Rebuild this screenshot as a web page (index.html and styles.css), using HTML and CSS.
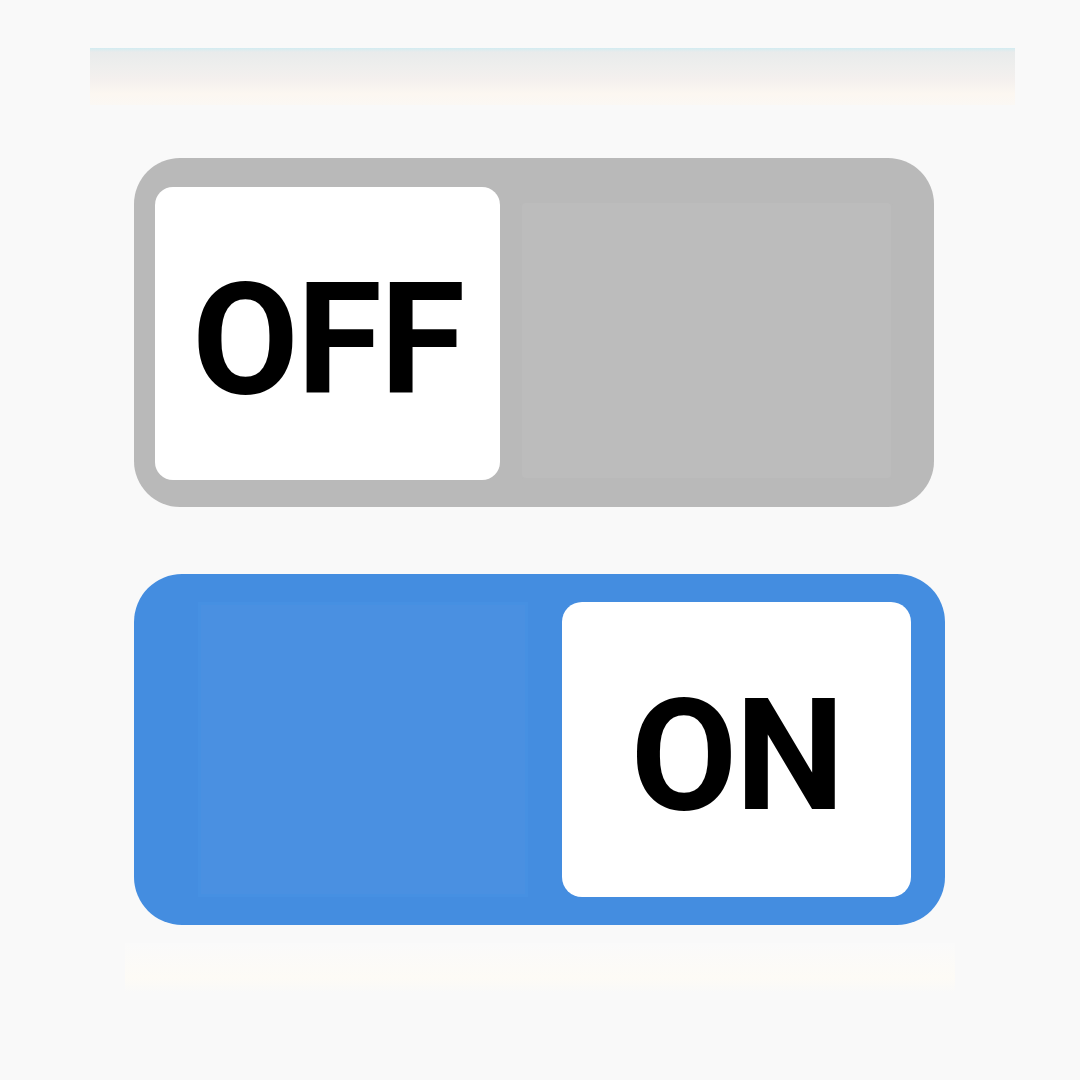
FILE: index.html
```html
<!DOCTYPE html>
<html>
<head>
<meta charset="utf-8">
<link rel="stylesheet" href="styles.css">
</head>
<body>
<div class="page">
  <div class="topbar"></div>
  <div class="toggle toggle-off">
    <div class="knob"><span class="label">OFF</span></div>
    <div class="track"></div>
  </div>
  <div class="toggle toggle-on">
    <div class="track"></div>
    <div class="knob"><span class="label">ON</span></div>
  </div>
  <div class="footband"></div>
</div>
</body>
</html>
```
FILE: styles.css
```css
html, body {
  margin: 0;
  padding: 0;
  background: #f9f9f9;
  width: 1080px;
  height: 1080px;
  overflow: hidden;
}
.page {
  display: flex;
  flex-direction: column;
  padding-top: 48px;
}
.topbar {
  margin-left: 90px;
  width: 925px;
  height: 57px;
  background: linear-gradient(to bottom, #d3ecf1 0px, #e9ebeb 4px, #eeeeed 18px, #f4f0ee 32px, #fcf7f1 46px, #fbf8f4 57px);
}
.toggle {
  display: flex;
  box-sizing: border-box;
  align-items: stretch;
}
.toggle-off {
  margin-top: 53px;
  margin-left: 134px;
  width: 800px;
  height: 349px;
  padding: 29px 41px 27px 21px;
  background: #b9b9b9;
  border-radius: 46px;
}
.toggle-on {
  margin-top: 67px;
  margin-left: 134px;
  width: 811px;
  height: 351px;
  padding: 28px 34px 28px 64px;
  background: #448de0;
  border-radius: 48px;
}
.knob {
  background: #ffffff;
  display: flex;
  align-items: center;
  justify-content: center;
  border-radius: 18px;
}
.toggle-off .knob {
  width: 345px;
  flex: 0 0 345px;
}
.toggle-on .knob {
  width: 349px;
  flex: 0 0 349px;
  border-radius: 20px;
}
.track {
  flex: 1;
}
.toggle-off .track {
  margin: 14px 0 0 20px;
  background: #bcbcbc;
  box-shadow: inset 0 0 0 2px #b9b9b9;
  border-radius: 6px;
}
.toggle-on .track {
  margin: 0 34px 0 0;
  background: #4a90e1;
  box-shadow: inset 0 0 0 3px #4690e2;
}
.label {
  font-family: Roboto, "Liberation Sans", sans-serif;
  font-weight: 700;
  font-size: 155px;
  line-height: 1;
  color: #000000;
  letter-spacing: -2px;
  position: relative;
  top: 7px;
}
.footband {
  margin-top: 18px;
  margin-left: 125px;
  width: 830px;
  height: 50px;
  background: linear-gradient(to bottom, #fafafa, #fdfbf6 70%, #f9f9f9);
}
```
